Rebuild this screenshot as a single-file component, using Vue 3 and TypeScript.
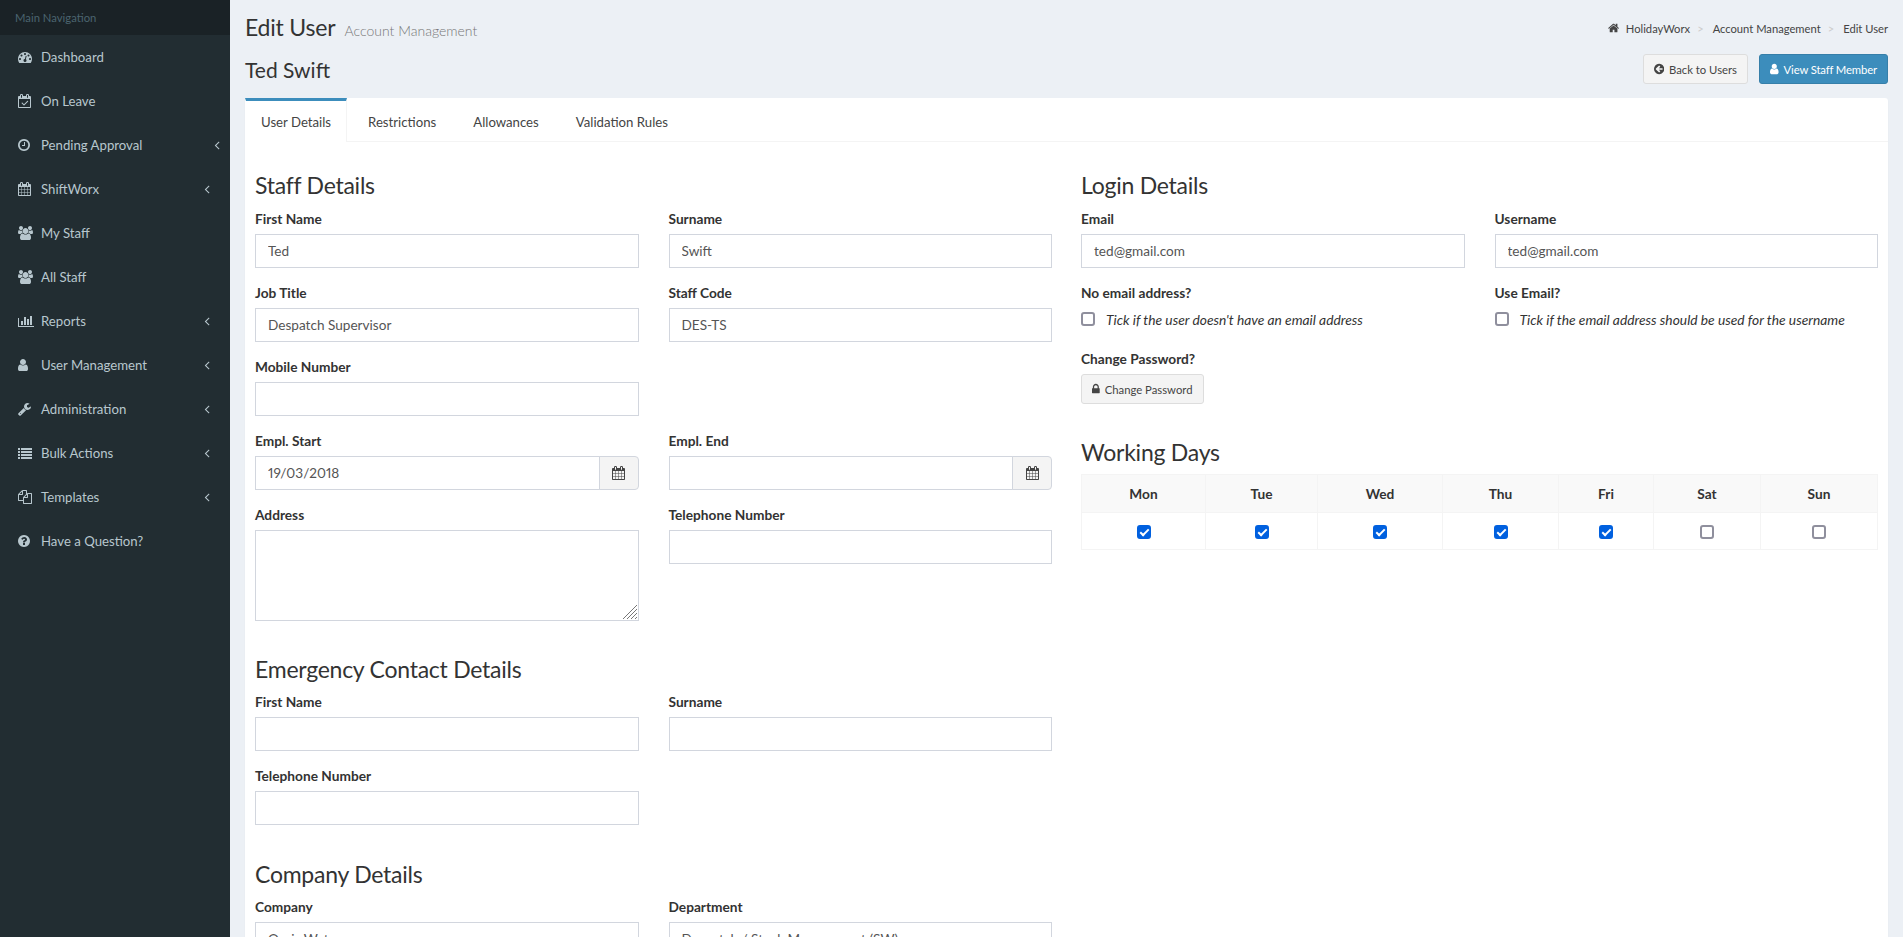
<script setup lang="ts">
interface Icon {
  x?: number
  w: number
  d: string
}

interface NavItem {
  label: string
  icon: Icon
  arrow?: boolean
  arrowFar?: boolean
}

interface Field {
  label: string
  value?: string
  kind?: 'text' | 'date' | 'area' | 'blank'
}

const icons: Record<string, Icon> = {
  dashboard: { w: 1792, d: 'M384 1152q0-53-37.5-90.5t-90.5-37.5-90.5 37.5-37.5 90.5 37.5 90.5 90.5 37.5 90.5-37.5 37.5-90.5zm192-448q0-53-37.5-90.5t-90.5-37.5-90.5 37.5-37.5 90.5 37.5 90.5 90.5 37.5 90.5-37.5 37.5-90.5zm428 481l101-382q6-26-7.5-48.5t-38.5-29.5-48 6.5-30 39.5l-101 382q-60 5-107 43.5t-63 98.5q-20 77 20 146t117 89 146-20 89-117q16-60-6-117t-72-91zm660-33q0-53-37.5-90.5t-90.5-37.5-90.5 37.5-37.5 90.5 37.5 90.5 90.5 37.5 90.5-37.5 37.5-90.5zm-640-640q0-53-37.5-90.5t-90.5-37.5-90.5 37.5-37.5 90.5 37.5 90.5 90.5 37.5 90.5-37.5 37.5-90.5zm448 192q0-53-37.5-90.5t-90.5-37.5-90.5 37.5-37.5 90.5 37.5 90.5 90.5 37.5 90.5-37.5 37.5-90.5zm320 448q0 261-141 483-19 29-54 29h-1402q-35 0-54-29-141-221-141-483 0-182 71-348t191-286 286-191 348-71 348 71 286 191 191 286 71 348z' },
  calendarCheck: { w: 1664, d: 'M1303 964l-512 512q-10 9-23 9t-23-9l-288-288q-9-10-9-23t9-22l46-46q9-9 22-9t23 9l220 220 444-444q10-9 23-9t22 9l46 46q9 9 9 22t-9 23zm-1175 700h1408v-1024h-1408v1024zm384-1216v-288q0-14-9-23t-23-9h-64q-14 0-23 9t-9 23v288q0 14 9 23t23 9h64q14 0 23-9t9-23zm768 0v-288q0-14-9-23t-23-9h-64q-14 0-23 9t-9 23v288q0 14 9 23t23 9h64q14 0 23-9t9-23zm384-64v1280q0 52-38 90t-90 38h-1408q-52 0-90-38t-38-90v-1280q0-52 38-90t90-38h128v-96q0-66 47-113t113-47h64q66 0 113 47t47 113v96h384v-96q0-66 47-113t113-47h64q66 0 113 47t47 113v96h128q52 0 90 38t38 90z' },
  clock: { x: 128, w: 1536, d: 'M1024 544v448q0 14-9 23t-23 9h-320q-14 0-23-9t-9-23v-64q0-14 9-23t23-9h224v-352q0-14 9-23t23-9h64q14 0 23 9t9 23zm416 352q0-148-73-273t-198-198-273-73-273 73-198 198-73 273 73 273 198 198 273 73 273-73 198-198 73-273zm224 0q0 209-103 385.5t-279.5 279.5-385.5 103-385.5-103-279.5-279.5-103-385.5 103-385.5 279.5-279.5 385.5-103 385.5 103 279.5 279.5 103 385.5z' },
  calendar: { x: 64, w: 1664, d: 'M192 1664h288v-288h-288v288zm352 0h320v-288h-320v288zm-352-352h288v-320h-288v320zm352 0h320v-320h-320v320zm-352-384h288v-288h-288v288zm736 736h320v-288h-320v288zm-384-736h320v-288h-320v288zm768 736h288v-288h-288v288zm-384-352h320v-320h-320v320zm-352-864v-288q0-13-9.5-22.5t-22.5-9.5h-64q-13 0-22.5 9.5t-9.5 22.5v288q0 13 9.5 22.5t22.5 9.5h64q13 0 22.5-9.5t9.5-22.5zm736 864h288v-320h-288v320zm-384-384h320v-288h-320v288zm384 0h288v-288h-288v288zm32-480v-288q0-13-9.5-22.5t-22.5-9.5h-64q-13 0-22.5 9.5t-9.5 22.5v288q0 13 9.5 22.5t22.5 9.5h64q13 0 22.5-9.5t9.5-22.5zm384-64v1280q0 52-38 90t-90 38h-1408q-52 0-90-38t-38-90v-1280q0-52 38-90t90-38h128v-96q0-66 47-113t113-47h64q66 0 113 47t47 113v96h384v-96q0-66 47-113t113-47h64q66 0 113 47t47 113v96h128q52 0 90 38t38 90z' },
  users: { w: 1920, d: 'M593 896q-162 5-265 128h-134q-82 0-138-40.5t-56-118.5q0-353 124-353 6 0 43.5 21t97.5 42.5 119 21.5q67 0 133-23-5 37-5 66 0 139 81 256zm1071 637q0 120-73 189.5t-194 69.5h-874q-121 0-194-69.5t-73-189.5q0-53 3.5-103.5t14-109 26.5-108.5 43-97.5 62-81 85.5-53.5 111.5-20q10 0 43 21.5t73 48 107 48 135 21.5 135-21.5 107-48 73-48 43-21.5q61 0 111.5 20t85.5 53.5 62 81 43 97.5 26.5 108.5 14 109 3.5 103.5zm-1024-1277q0 106-75 181t-181 75-181-75-75-181 75-181 181-75 181 75 75 181zm704 384q0 159-112.5 271.5t-271.5 112.5-271.5-112.5-112.5-271.5 112.5-271.5 271.5-112.5 271.5 112.5 112.5 271.5zm576 225q0 78-56 118.5t-138 40.5h-134q-103-123-265-128 81-117 81-256 0-29-5-66 66 23 133 23 59 0 119-21.5t97.5-42.5 43.5-21q124 0 124 353zm-128-609q0 106-75 181t-181 75-181-75-75-181 75-181 181-75 181 75 75 181z' },
  barChart: { w: 2048, d: 'M640 896v512h-256v-512h256zm384-512v1024h-256v-1024h256zm1024 1152v128h-2048v-1152h128v1024h1920zm-640-896v768h-256v-768h256zm384-384v1152h-256v-1152h256z' },
  user: { x: 256, w: 1280, d: 'M1536 1399q0 109-62.5 187t-150.5 78h-854q-88 0-150.5-78t-62.5-187q0-85 8.5-160.5t31.5-152 58.5-131 94-89 134.5-34.5q131 128 313 128t313-128q76 0 134.5 34.5t94 89 58.5 131 31.5 152 8.5 160.5zm-256-887q0 159-112.5 271.5t-271.5 112.5-271.5-112.5-112.5-271.5 112.5-271.5 271.5-112.5 271.5 112.5 112.5 271.5z' },
  wrench: { x: 64, w: 1664, d: 'M448 1472q0-26-19-45t-45-19-45 19-19 45 19 45 45 19 45-19 19-45zm644-420l-682 682q-37 37-90 37-52 0-91-37l-106-108q-38-36-38-90 0-53 38-91l681-681q39 98 114.5 173.5t173.5 114.5zm634-435q0 39-23 106-47 134-164.5 217.5t-258.5 83.5q-185 0-316.5-131.5t-131.5-316.5 131.5-316.5 316.5-131.5q58 0 121.5 16.5t107.5 46.5q16 11 16 28t-16 28l-293 169v224l193 107q5-3 79-48.5t135.5-81 70.5-35.5q15 0 23.5 10t8.5 25z' },
  list: { w: 1792, d: 'M0 256h256v256H0zM384 256h1408v256H384zM0 640h256v256H0zM384 640h1408v256H384zM0 1024h256v256H0zM384 1024h1408v256H384zM0 1408h256v256H0zM384 1408h1408v256H384z' },
  files: { w: 1792, d: 'M1696 384q40 0 68 28t28 68v1216q0 40-28 68t-68 28h-960q-40 0-68-28t-28-68v-288h-544q-40 0-68-28t-28-68v-672q0-40 20-88t48-76l408-408q28-28 76-48t88-20h416q40 0 68 28t28 68v328q68-40 128-40h416zm-544 213l-299 299h299v-299zm-640-384l-299 299h299v-299zm194 647l316-316v-416h-384v416q0 40-28 68t-68 28h-416v640h512v-256q0-40 20-88t48-76zm956 804v-1152h-384v416q0 40-28 68t-68 28h-416v640h896z' },
  question: { x: 128, w: 1536, d: 'M1024 1376v-192q0-14-9-23t-23-9h-192q-14 0-23 9t-9 23v192q0 14 9 23t23 9h192q14 0 23-9t9-23zm256-672q0-88-55.5-163t-138.5-116-170-41q-243 0-371 213-15 24 8 42l132 100q7 6 19 6 16 0 25-12 53-68 86-92 34-24 86-24 48 0 85.5 26t37.5 59q0 38-20 61t-68 45q-63 28-115.5 86.5t-52.5 125.5v36q0 14 9 23t23 9h192q14 0 23-9t9-23q0-19 21.5-49.5t54.5-49.5q32-18 49-28.5t46-35 44.5-48 28-60.5 12.5-81zm384 192q0 209-103 385.5t-279.5 279.5-385.5 103-385.5-103-279.5-279.5-103-385.5 103-385.5 279.5-279.5 385.5-103 385.5 103 279.5 279.5 103 385.5z' },
  home: { x: 64, w: 1664, d: 'M1472 992v480q0 26-19 45t-45 19h-384v-384h-256v384h-384q-26 0-45-19t-19-45v-480q0-1 .5-3t.5-3l575-474 575 474q1 2 1 6zm223-69l-62 74q-8 9-21 11h-3q-13 0-21-7l-692-577-692 577q-12 8-24 7-13-2-21-11l-62-74q-8-10-7-23.5t11-21.5l719-599q32-26 76-26t76 26l244 204v-195q0-14 9-23t23-9h192q14 0 23 9t9 23v408l219 182q10 8 11 21.5t-7 23.5z' },
  back: { x: 128, w: 1536, d: 'M1408 960v-128q0-26-19-45t-45-19h-502l189-189q19-19 19-45t-19-45l-91-91q-18-18-45-18t-45 18l-362 362-91 91q-18 18-18 45t18 45l91 91 362 362q18 18 45 18t45-18l91-91q18-18 18-45t-18-45l-189-189h502q26 0 45-19t19-45zm256-64q0 209-103 385.5t-279.5 279.5-385.5 103-385.5-103-279.5-279.5-103-385.5 103-385.5 279.5-279.5 385.5-103 385.5 103 279.5 279.5 103 385.5z' },
  lock: { x: 320, w: 1152, d: 'M640 768h512v-192q0-106-75-181t-181-75-181 75-75 181v192zm832 96v576q0 40-28 68t-68 28h-960q-40 0-68-28t-28-68v-576q0-40 28-68t68-28h32v-192q0-184 132-316t316-132 316 132 132 316v192h32q40 0 68 28t28 68z' },
  angle: { w: 1792, d: 'M1203 544q0 13-10 23l-393 393 393 393q10 10 10 23t-10 23l-50 50q-10 10-23 10t-23-10l-466-466q-10-10-10-23t10-23l466-466q10-10 23-10t23 10l50 50q10 10 10 23z' },
}

function box(icon: Icon): string {
  return `${icon.x ?? 0} 0 ${icon.w} 1792`
}

const nav: NavItem[] = [
  { label: 'Dashboard', icon: icons.dashboard },
  { label: 'On Leave', icon: icons.calendarCheck },
  { label: 'Pending Approval', icon: icons.clock, arrow: true, arrowFar: true },
  { label: 'ShiftWorx', icon: icons.calendar, arrow: true },
  { label: 'My Staff', icon: icons.users },
  { label: 'All Staff', icon: icons.users },
  { label: 'Reports', icon: icons.barChart, arrow: true },
  { label: 'User Management', icon: icons.user, arrow: true },
  { label: 'Administration', icon: icons.wrench, arrow: true },
  { label: 'Bulk Actions', icon: icons.list, arrow: true },
  { label: 'Templates', icon: icons.files, arrow: true },
  { label: 'Have a Question?', icon: icons.question },
]

const tabs = ['User Details', 'Restrictions', 'Allowances', 'Validation Rules']

const sections: { title: string; fields: Field[] }[] = [
  {
    title: 'Staff Details',
    fields: [
      { label: 'First Name', value: 'Ted' },
      { label: 'Surname', value: 'Swift' },
      { label: 'Job Title', value: 'Despatch Supervisor' },
      { label: 'Staff Code', value: 'DES-TS' },
      { label: 'Mobile Number' },
      { label: '', kind: 'blank' },
      { label: 'Empl. Start', value: '19/03/2018', kind: 'date' },
      { label: 'Empl. End', kind: 'date' },
      { label: 'Address', kind: 'area' },
      { label: 'Telephone Number' },
    ],
  },
  {
    title: 'Emergency Contact Details',
    fields: [
      { label: 'First Name' },
      { label: 'Surname' },
      { label: 'Telephone Number' },
    ],
  },
  {
    title: 'Company Details',
    fields: [
      { label: 'Company', value: 'Oasis Water' },
      { label: 'Department', value: 'Despatch / Stock Management (SW)' },
    ],
  },
]

const days = [
  { name: 'Mon', on: true, width: 124 },
  { name: 'Tue', on: true, width: 112 },
  { name: 'Wed', on: true, width: 125 },
  { name: 'Thu', on: true, width: 116 },
  { name: 'Fri', on: true, width: 95 },
  { name: 'Sat', on: false, width: 107 },
  { name: 'Sun', on: false, width: 117 },
]
</script>

<template>
  <div class="wrapper">
    <aside class="sidebar">
      <div class="sidebar-title">Main Navigation</div>
      <ul class="menu">
        <li v-for="item in nav" :key="item.label" class="menu-item">
          <span class="menu-icon">
            <svg class="fa" :viewBox="box(item.icon)"><path :d="item.icon.d" /></svg>
          </span>
          <span>{{ item.label }}</span>
          <svg
            v-if="item.arrow"
            class="fa menu-arrow"
            :class="{ 'menu-arrow--far': item.arrowFar }"
            viewBox="0 0 1792 1792"
          ><path :d="icons.angle.d" /></svg>
        </li>
      </ul>
    </aside>

    <main class="content">
      <header class="page-head">
        <h1>Edit User <small>Account Management</small></h1>
        <ol class="breadcrumb">
          <li><svg class="fa crumb-home" :viewBox="box(icons.home)"><path :d="icons.home.d" /></svg>HolidayWorx</li>
          <li class="crumb-sep">&gt;</li>
          <li>Account Management</li>
          <li class="crumb-sep">&gt;</li>
          <li>Edit User</li>
        </ol>
      </header>

      <div class="sub-head">
        <h2>Ted Swift</h2>
        <div class="sub-actions">
          <button class="btn" type="button">
            <svg class="fa" :viewBox="box(icons.back)"><path :d="icons.back.d" /></svg>Back to Users
          </button>
          <button class="btn btn--primary" type="button">
            <svg class="fa" :viewBox="box(icons.user)"><path :d="icons.user.d" /></svg>View Staff Member
          </button>
        </div>
      </div>

      <section class="card">
        <ul class="tabs">
          <li v-for="(tab, i) in tabs" :key="tab" class="tab" :class="{ 'tab--active': i === 0 }">{{ tab }}</li>
        </ul>

        <div class="panel">
          <div class="column">
            <template v-for="section in sections" :key="section.title">
              <h3>{{ section.title }}</h3>
              <div class="form-row">
                <template v-for="(field, i) in section.fields" :key="i">
                  <div v-if="field.kind === 'blank'" />
                  <div v-else class="form-group">
                    <label>{{ field.label }}</label>
                    <div v-if="field.kind === 'area'" class="area-wrap">
                      <textarea class="control control--area" />
                      <svg class="grip" viewBox="0 0 14 14">
                        <path d="M0 14L14 0M4 14L14 4M8 14L14 8M12 14L14 12" />
                      </svg>
                    </div>
                    <div v-else-if="field.kind === 'date'" class="input-group">
                      <input class="control" type="text" :value="field.value" />
                      <span class="addon">
                        <svg class="fa" :viewBox="box(icons.calendar)"><path :d="icons.calendar.d" /></svg>
                      </span>
                    </div>
                    <input v-else class="control" type="text" :value="field.value" />
                  </div>
                </template>
              </div>
            </template>
          </div>

          <div class="column">
            <h3>Login Details</h3>
            <div class="form-row">
              <div class="form-group">
                <label>Email</label>
                <input class="control" type="text" value="ted@gmail.com" />
              </div>
              <div class="form-group">
                <label>Username</label>
                <input class="control" type="text" value="ted@gmail.com" />
              </div>
              <div class="form-group">
                <label>No email address?</label>
                <div class="check-line">
                  <input class="check" type="checkbox" />
                  <em>Tick if the user doesn't have an email address</em>
                </div>
              </div>
              <div class="form-group">
                <label>Use Email?</label>
                <div class="check-line">
                  <input class="check" type="checkbox" />
                  <em>Tick if the email address should be used for the username</em>
                </div>
              </div>
            </div>
            <div class="form-group">
              <label>Change Password?</label>
              <div>
                <button class="btn" type="button">
                  <svg class="fa" :viewBox="box(icons.lock)"><path :d="icons.lock.d" /></svg>Change Password
                </button>
              </div>
            </div>

            <h3 class="days-title">Working Days</h3>
            <table class="days">
              <colgroup>
                <col v-for="day in days" :key="day.name" :style="{ width: day.width + 'px' }" />
              </colgroup>
              <thead>
                <tr><th v-for="day in days" :key="day.name">{{ day.name }}</th></tr>
              </thead>
              <tbody>
                <tr>
                  <td v-for="day in days" :key="day.name">
                    <input class="check" type="checkbox" :checked="day.on" />
                  </td>
                </tr>
              </tbody>
            </table>
          </div>
        </div>
      </section>
    </main>
  </div>
</template>

<style scoped>
.wrapper {
  display: flex;
  height: 100vh;
  overflow: hidden;
  font-family: Lato, "Open Sans", sans-serif;
  font-size: 13.6px;
  color: #333;
  background: #ecf0f5;
}

.fa {
  width: auto;
  height: 14px;
  flex-shrink: 0;
  fill: currentColor;
}

/* sidebar */
.sidebar {
  flex: 0 0 230px;
  background: #222d32;
}

.sidebar-title {
  height: 35px;
  padding: 10px 15px;
  box-sizing: border-box;
  font-size: 11.3px;
  line-height: 15px;
  color: #4b646f;
  background: #1a2226;
}

.menu {
  margin: 0;
  padding: 0;
  list-style: none;
}

.menu-item {
  display: flex;
  align-items: center;
  height: 44px;
  padding-left: 18px;
  font-size: 13.2px;
  color: #b8c7ce;
}

.menu-icon {
  display: flex;
  width: 23px;
}

.menu-arrow {
  margin-left: auto;
  margin-right: 16px;
}

.menu-arrow--far {
  margin-right: 6px;
}

/* page header */
.content {
  flex: 1;
  min-width: 0;
  padding: 15px 15px 0;
}

.page-head,
.sub-head {
  display: flex;
  justify-content: space-between;
}

.page-head {
  height: 24px;
}

h1 {
  margin: 0;
  font-size: 23px;
  font-weight: 400;
  line-height: 24px;
  letter-spacing: -0.2px;
}

h1 small {
  margin-left: 4px;
  font-size: 14px;
  font-weight: 300;
  letter-spacing: 0;
  color: #777;
}

.breadcrumb {
  display: flex;
  align-items: center;
  margin: 3px 0 0;
  padding: 0;
  height: 20px;
  list-style: none;
  font-size: 11.2px;
  color: #444;
}

.crumb-home {
  height: 12px;
  margin-right: 7px;
  vertical-align: -1px;
}

.crumb-sep {
  margin: 0 9px 0 7px;
  color: #ccc;
}

.sub-head {
  align-items: center;
  height: 30px;
  margin: 15px 0 14px;
}

h2 {
  margin: 0;
  font-size: 21px;
  font-weight: 400;
}

.sub-actions {
  display: flex;
  gap: 11px;
}

.btn {
  display: inline-flex;
  align-items: center;
  gap: 5px;
  height: 30px;
  padding: 0 10px;
  box-sizing: border-box;
  font: inherit;
  font-size: 11.3px;
  color: #444;
  background: #f4f4f4;
  border: 1px solid #ddd;
  border-radius: 3px;
}

.btn .fa {
  height: 12px;
}

.btn--primary {
  letter-spacing: -0.14px;
  color: #fff;
  background: #3c8dbc;
  border-color: #367fa9;
}

/* card and tabs */
.card {
  background: #fff;
  border-radius: 3px;
  box-shadow: 0 1px 1px rgba(0, 0, 0, 0.1);
}

.tabs {
  display: flex;
  height: 44px;
  margin: 0;
  padding: 0;
  box-sizing: border-box;
  list-style: none;
  border-bottom: 1px solid #f4f4f4;
}

.tab {
  height: 44px;
  margin-right: 5px;
  padding: 14px 15px 0;
  box-sizing: border-box;
  border: 1px solid transparent;
  border-width: 0 1px;
  font-size: 13.2px;
  line-height: 20px;
  color: #444;
}

.tab--active {
  padding-top: 11px;
  border-top: 3px solid #3c8dbc;
  border-right-color: #f4f4f4;
  background: #fff;
}

.panel {
  display: grid;
  grid-template-columns: 797px 797px;
  column-gap: 29px;
  padding: 0 10px 10px;
}

h3 {
  margin: 30px 0 10px;
  font-size: 23px;
  font-weight: 400;
  line-height: 26.4px;
  letter-spacing: -0.25px;
}

.column > h3:first-child {
  margin-bottom: 11px;
}

.form-row {
  display: grid;
  grid-template-columns: 1fr 1fr;
  column-gap: 30px;
  margin-bottom: -1px;
}

.form-row + h3 {
  margin-top: 20.5px;
}

.form-row + h3:nth-of-type(3) {
  margin-top: 21.5px;
}

h3.days-title {
  margin: 35px 0 8px;
}

.form-group {
  margin-bottom: 15px;
}

label {
  display: block;
  margin-bottom: 5px;
  font-size: 13.7px;
  font-weight: 700;
  line-height: 20px;
}

.control {
  display: block;
  width: 100%;
  height: 34px;
  padding: 6px 12px;
  box-sizing: border-box;
  font: inherit;
  font-variant-numeric: proportional-nums;
  color: #555;
  background: #fff;
  border: 1px solid #d2d6de;
  border-radius: 0;
  outline: none;
}

.area-wrap {
  position: relative;
}

.control--area {
  height: 91px;
  resize: none;
}

.grip {
  position: absolute;
  right: 2px;
  bottom: 2px;
  width: 14px;
  height: 14px;
  fill: none;
  stroke: #777;
  stroke-width: 1;
  pointer-events: none;
}

.input-group {
  display: flex;
}

.input-group .control {
  flex: 1;
  min-width: 0;
}

.addon {
  display: flex;
  align-items: center;
  justify-content: center;
  flex: 0 0 40px;
  margin-left: -1px;
  box-sizing: border-box;
  color: #444;
  background: #f4f4f4;
  border: 1px solid #d2d6de;
  border-radius: 0 4px 4px 0;
}

.check-line {
  display: flex;
  align-items: center;
  gap: 11px;
  height: 22px;
  margin-bottom: 5px;
  font-size: 13.8px;
}

.check {
  position: relative;
  width: 14px;
  height: 14px;
  margin: 0;
  appearance: none;
  background: #fff;
  border: 2px solid #8f8f9d;
  border-radius: 3px;
  vertical-align: middle;
}

.check:checked {
  background: #0060df;
  border-color: #0060df;
}

.check:checked::after {
  content: "";
  position: absolute;
  left: 3px;
  top: 0;
  width: 3px;
  height: 7px;
  border: solid #fff;
  border-width: 0 2px 2px 0;
  transform: rotate(45deg);
}

/* working days */
.days {
  width: 100%;
  border-collapse: collapse;
  table-layout: fixed;
}

.days th,
.days td {
  padding: 0;
  text-align: center;
  border: 1px solid #f4f4f4;
}

.days th {
  height: 37px;
  font-size: 13.7px;
  background: #f9f9f9;
}

.days td {
  height: 36px;
}
</style>
